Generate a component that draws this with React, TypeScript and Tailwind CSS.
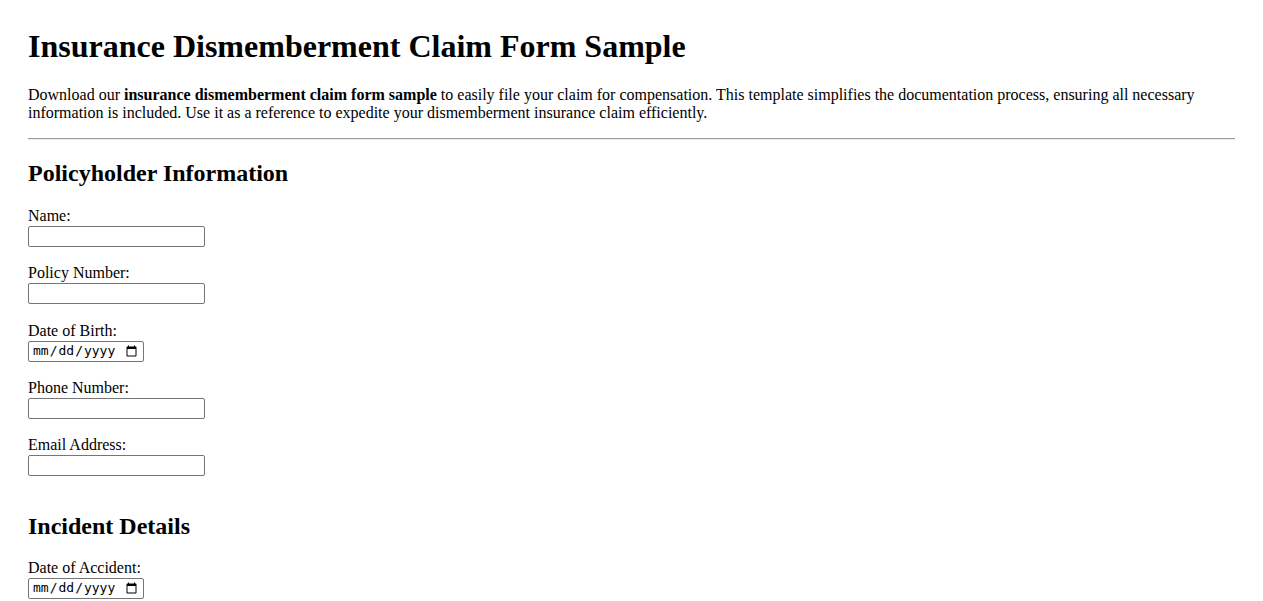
import React from "react"

/* ─── Field definitions ─────────────────────────────────── */
type Field = { label: string; type: "text" | "date" | "tel" | "email" }

const POLICYHOLDER: Field[] = [
  { label: "Name:", type: "text" },
  { label: "Policy Number:", type: "text" },
  { label: "Date of Birth:", type: "date" },
  { label: "Phone Number:", type: "tel" },
  { label: "Email Address:", type: "email" },
]

const INCIDENT: Field[] = [{ label: "Date of Accident:", type: "date" }]

/* ─── One label + input row ─────────────────────────────── */
function FormField({ field }: { field: Field }) {
  const isDate = field.type === "date"
  return (
    <div className="flex flex-col items-start mb-[17.33px]">
      <label className="text-[16px] leading-[18px]">{field.label}</label>
      <input
        type={field.type}
        className={
          isDate
            ? "w-[116px] h-[21px] mt-[1px] px-[3px] border border-[#767676] rounded-[2px] bg-white text-[13px] font-['DejaVu_Sans_Mono',monospace] text-black"
            : "w-[177px] h-[21px] mt-[1px] px-[2px] border border-[#767676] rounded-[2px] bg-white text-[13px] text-black"
        }
      />
    </div>
  )
}

export default function App() {
  return (
    <div className="min-h-screen bg-white text-black font-['Liberation_Serif','Times_New_Roman',serif] px-[28px] pt-[28px]">
      <h1 className="text-[32px] font-bold leading-[37px]">
        Insurance Dismemberment Claim Form Sample
      </h1>

      <p className="mt-[21px] text-[16px] leading-[18px]">
        Download our <strong>insurance dismemberment claim form sample</strong> to easily file your
        claim for compensation. This template simplifies the documentation process, ensuring all
        necessary information is included. Use it as a reference to expedite your dismemberment
        insurance claim efficiently.
      </p>

      <hr className="mt-[16px] border-t border-t-[#9a9a9a] border-b border-b-[#eeeeee]" />

      <form className="flex flex-col">
        <h2 className="mt-[19px] mb-[20px] text-[24px] font-bold leading-[28px]">
          Policyholder Information
        </h2>
        {POLICYHOLDER.map((f) => (
          <FormField key={f.label} field={f} />
        ))}

        <h2 className="mt-[18px] mb-[19px] text-[24px] font-bold leading-[28px]">
          Incident Details
        </h2>
        {INCIDENT.map((f) => (
          <FormField key={f.label} field={f} />
        ))}
      </form>
    </div>
  )
}
